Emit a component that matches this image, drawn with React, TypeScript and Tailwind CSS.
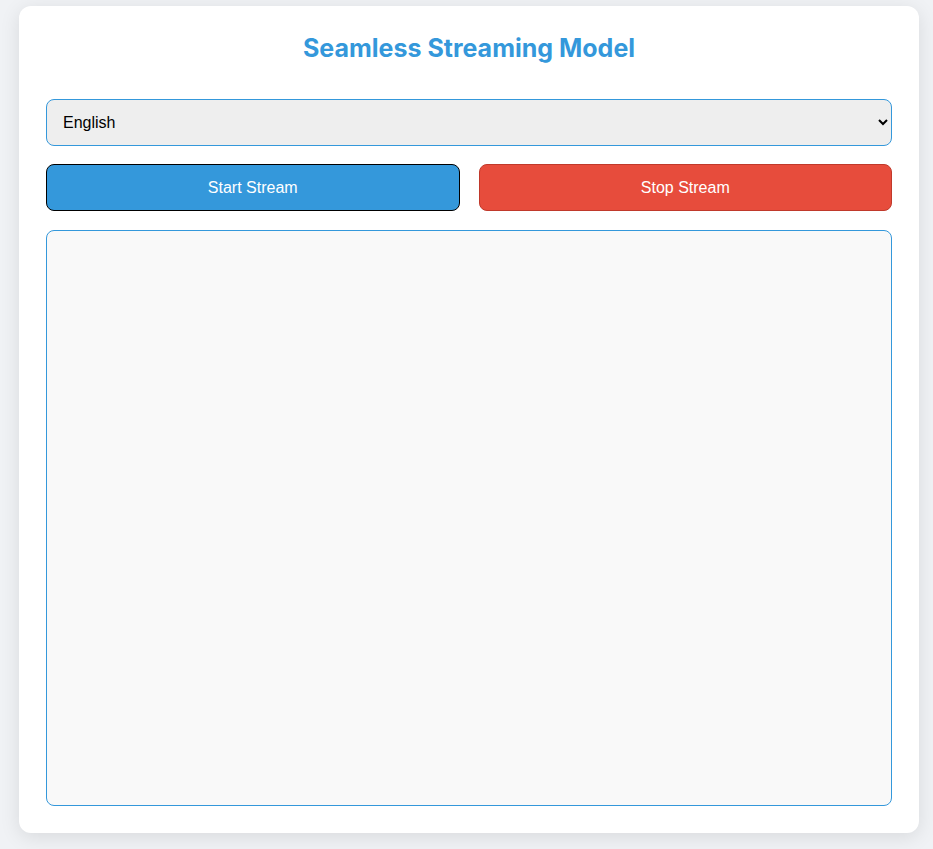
import { useState } from 'react'

export default function App() {
  const [lang, setLang] = useState('en')

  return (
    <div className="min-h-screen bg-[#f0f2f5] pl-[19px] pt-[6px] pb-[16px]">
      <div className="w-[900px] bg-white rounded-[12px] shadow-[0_4px_20px_rgba(0,0,0,0.1)] p-[27px]">
        <h1 className="text-center text-[25px] leading-[30px] font-bold text-[#3498db] mt-[0px] mb-[36px]" style={{ fontFamily: 'Inter, sans-serif' }}>
          Seamless Streaming Model
        </h1>

        <select
          value={lang}
          onChange={(e) => setLang(e.target.value)}
          className="block w-full h-[47px] px-[12px] rounded-[8px] border border-[#3498db] bg-[#eeeeee] text-[16px] text-black outline-none"
          style={{ fontFamily: '"Liberation Sans", Arial, sans-serif' }}
        >
          <option value="en">English</option>
          <option value="fr">French</option>
          <option value="es">Spanish</option>
        </select>

        <div className="flex gap-[19px] mt-[18px]">
          <button
            className="flex-1 h-[47px] rounded-[8px] border border-black bg-[#3498db] text-white text-[16px]"
            style={{ fontFamily: '"Liberation Sans", Arial, sans-serif' }}
          >
            Start Stream
          </button>
          <button
            className="flex-1 h-[47px] rounded-[8px] border border-[#c0392b] bg-[#e74c3c] text-white text-[16px]"
            style={{ fontFamily: '"Liberation Sans", Arial, sans-serif' }}
          >
            Stop Stream
          </button>
        </div>

        <div className="mt-[19px] h-[576px] rounded-[8px] border border-[#3498db] bg-[#f9f9f9]"></div>
      </div>
    </div>
  )
}
